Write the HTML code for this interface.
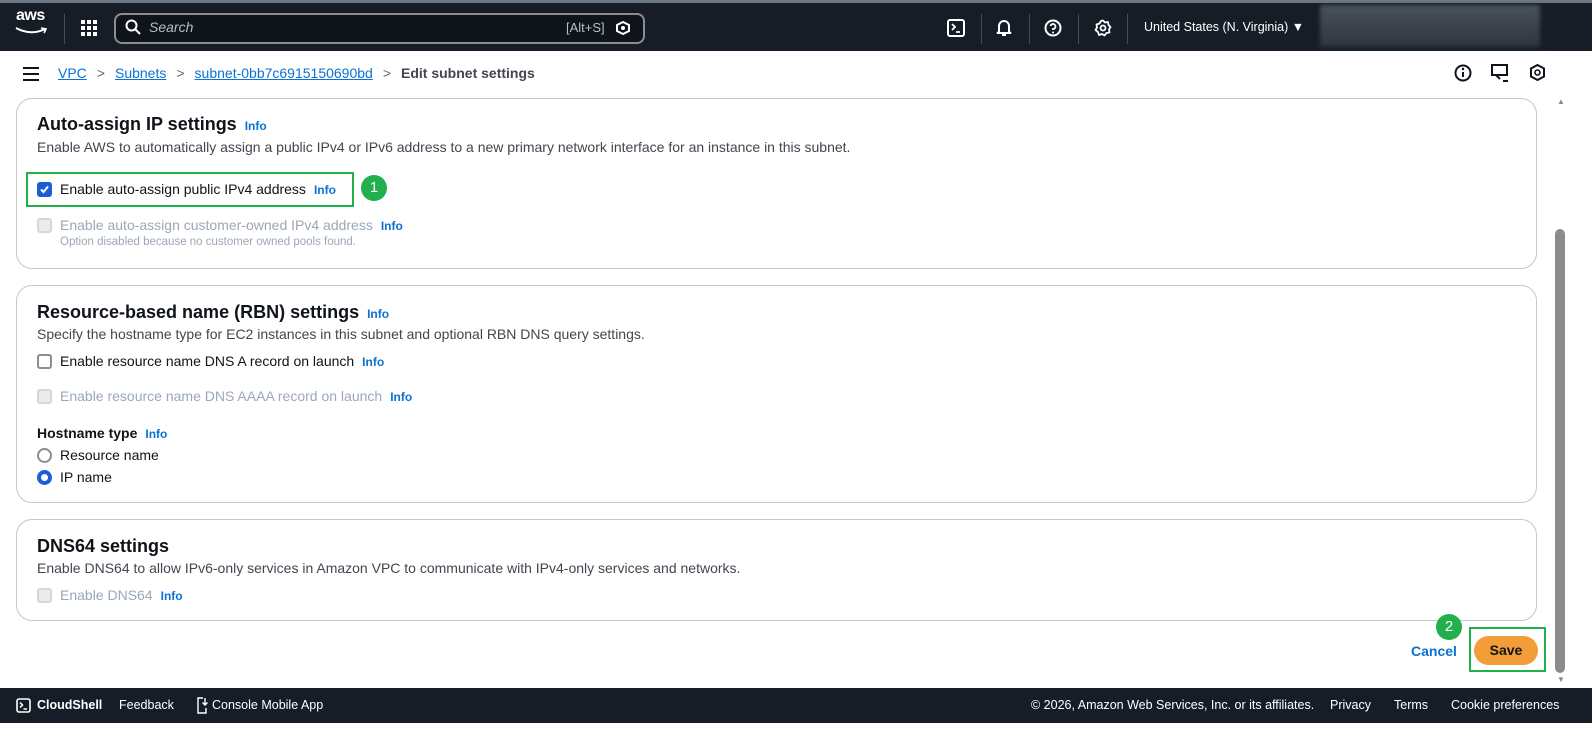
<!DOCTYPE html>
<html><head><meta charset="utf-8"><style>
*{box-sizing:border-box;margin:0;padding:0}
body{width:1592px;height:734px;overflow:hidden;background:#fff;font-family:"Liberation Sans",sans-serif;color:#0f141a;font-size:14px;position:relative}
.top{position:absolute;left:0;top:0;width:1592px;height:51px;background:#161d26;border-top:3px solid #6b7887}
.a{position:absolute}
.w{color:#fff}
.sep{position:absolute;top:11px;width:1px;height:30px;background:#414d5c}
.crumb{position:absolute;top:51px;left:0;width:1592px;height:46px;background:#fff}
.link{color:#0972d3;text-decoration:underline}
.card{position:absolute;left:16px;width:1521px;border:1px solid #c6c6cd;border-radius:16px;background:#fff}
h2{font-size:18px;font-weight:bold;position:absolute;left:20px}
.info{color:#0972d3;font-weight:bold;font-size:12px;margin-left:8px}
.desc{position:absolute;left:20px;font-size:14px;color:#424650}
.cb{position:absolute;width:15px;height:15px;border:2px solid #8c8c94;border-radius:3px;background:#fff}
.cb.d{border-color:#d5d5da;background:#e9ebed}
.lbl{position:absolute;font-size:14px}
.dis{color:#9ba7b6}
.gb{position:absolute;border:2px solid #21b04b}
.num{position:absolute;width:26px;height:26px;border-radius:13px;background:#21b04b;color:#fff;text-align:center;line-height:26px;font-size:15px}
.foot{position:absolute;left:0;top:688px;width:1592px;height:35px;background:#161d26;color:#fff;font-size:12.5px}
.foot span{position:absolute;top:10px}
</style></head><body>
<div class="top">
 <div class="a w" style="left:16px;top:4px;font-size:16px;letter-spacing:-0.5px;font-weight:bold">aws</div>
 <svg class="a" style="left:15px;top:24px" width="34" height="8"><path d="M1 1 Q16 9 30 2" stroke="#fff" stroke-width="2" fill="none"/><path d="M26 1 L31 2 L29 6" stroke="#fff" stroke-width="1.6" fill="none"/></svg>
 <div class="sep" style="left:64px"></div>
 <svg class="a" style="left:81px;top:17px" width="16" height="16" fill="#fff"><rect x="0" y="0" width="4" height="4"/><rect x="6" y="0" width="4" height="4"/><rect x="12" y="0" width="4" height="4"/><rect x="0" y="6" width="4" height="4"/><rect x="6" y="6" width="4" height="4"/><rect x="12" y="6" width="4" height="4"/><rect x="0" y="12" width="4" height="4"/><rect x="6" y="12" width="4" height="4"/><rect x="12" y="12" width="4" height="4"/></svg>
 <div class="a" style="left:114px;top:10px;width:531px;height:31px;border:2px solid #8c8c94;border-radius:8px;background:#0f141a"></div>
 <svg class="a" style="left:125px;top:16px" width="16" height="16"><circle cx="6.5" cy="6.5" r="5" stroke="#fff" stroke-width="2" fill="none"/><path d="M10 10 L15 15" stroke="#fff" stroke-width="2"/></svg>
 <div class="a" style="left:149px;top:16px;color:#b6bec9;font-style:italic;font-size:14px">Search</div>
 <div class="a" style="left:566px;top:17px;color:#b6bec9;font-size:13px">[Alt+S]</div>
 <svg class="a" style="left:616px;top:18px" width="14" height="14"><path d="M7 1 L13 4 L13 10 L7 13 L1 10 L1 4Z" stroke="#fff" stroke-width="2" fill="none"/><circle cx="7" cy="7" r="2" fill="#fff"/></svg>
 <svg class="a" style="left:947px;top:16px" width="18" height="18"><rect x="1" y="1" width="16" height="16" rx="2" stroke="#fff" stroke-width="2" fill="none"/><path d="M5 5 L8 8 L5 11 M9 13 H13" stroke="#fff" stroke-width="1.8" fill="none"/></svg>
 <div class="sep" style="left:981px"></div>
 <svg class="a" style="left:995px;top:15px" width="18" height="20"><path d="M4 14 V8 A5 5 0 0 1 14 8 V14 L16 15 H2 Z M7 17 H11" stroke="#fff" stroke-width="2" fill="none"/></svg>
 <div class="sep" style="left:1029px"></div>
 <svg class="a" style="left:1044px;top:16px" width="18" height="18"><circle cx="9" cy="9" r="7.5" stroke="#fff" stroke-width="2" fill="none"/><path d="M6.5 7 A2.5 2.5 0 1 1 9 10 V11" stroke="#fff" stroke-width="1.8" fill="none"/><circle cx="9" cy="13.5" r="1" fill="#fff"/></svg>
 <div class="sep" style="left:1078px"></div>
 <svg class="a" style="left:1094px;top:16px" width="18" height="18"><path d="M9 1.5 L11 3.5 L14 3 L14.5 6 L16.5 8 L15 10.5 L15.5 13.5 L12.5 14 L10.5 16.5 L8 15 L5 16 L4 13 L1.5 11 L3 8.5 L2.5 5.5 L5.5 4.5 L7 2Z" stroke="#fff" stroke-width="1.8" fill="none" stroke-linejoin="round"/><circle cx="9" cy="9" r="2.5" stroke="#fff" stroke-width="1.8" fill="none"/></svg>
 <div class="sep" style="left:1127px"></div>
 <div class="a w" style="left:1144px;top:17px;font-size:12.5px">United States (N. Virginia) ▼</div>
 <div class="a" style="left:1320px;top:2px;width:220px;height:42px;background:linear-gradient(#4a525c,#2e353e);filter:blur(2px)"></div>
</div>
<div class="crumb">
 <svg class="a" style="left:23px;top:16px" width="16" height="14"><path d="M0 1H16M0 7H16M0 13H16" stroke="#0f141a" stroke-width="2"/></svg>
 <div class="a" style="left:58px;top:14px;font-size:14px"><span class="link">VPC</span><span style="color:#656871;margin:0 10px">&gt;</span><span class="link">Subnets</span><span style="color:#656871;margin:0 10px">&gt;</span><span class="link">subnet-0bb7c6915150690bd</span><span style="color:#656871;margin:0 10px">&gt;</span><b style="color:#424650">Edit subnet settings</b></div>
 <svg class="a" style="left:1454px;top:13px" width="18" height="18"><circle cx="9" cy="9" r="7.5" stroke="#0f141a" stroke-width="2" fill="none"/><path d="M9 8V13" stroke="#0f141a" stroke-width="2"/><circle cx="9" cy="5" r="1.2"/></svg>
 <svg class="a" style="left:1491px;top:13px" width="18" height="19"><rect x="1" y="1" width="15" height="10" stroke="#0f141a" stroke-width="2" fill="none"/><path d="M5 11 L9 15 M12 17 H17" stroke="#0f141a" stroke-width="2"/></svg>
 <svg class="a" style="left:1530px;top:13px" width="15" height="17"><path d="M7.5 1 L14 4.5 L14 12.5 L7.5 16 L1 12.5 L1 4.5Z" stroke="#0f141a" stroke-width="2" fill="none"/><circle cx="7.5" cy="8.5" r="2.5" stroke="#0f141a" stroke-width="1.6" fill="none"/></svg>
</div>

<div class="card" style="top:98px;height:171px">
 <h2 style="top:15px">Auto-assign IP settings<span class="info">Info</span></h2>
 <div class="desc" style="top:40px">Enable AWS to automatically assign a public IPv4 or IPv6 address to a new primary network interface for an instance in this subnet.</div>
</div>
<div class="gb" style="left:26px;top:172px;width:328px;height:35px"></div>
<div class="cb" style="left:37px;top:182px;background:#1b5fd6;border-color:#1b5fd6"></div>
<svg class="a" style="left:39px;top:184px" width="11" height="11"><path d="M2 5.5 L4.5 8 L9 2.5" stroke="#fff" stroke-width="2" fill="none"/></svg>
<div class="lbl" style="left:60px;top:181px">Enable auto-assign public IPv4 address<span class="info">Info</span></div>
<div class="num" style="left:361px;top:175px">1</div>
<div class="cb d" style="left:37px;top:218px"></div>
<div class="lbl dis" style="left:60px;top:217px">Enable auto-assign customer-owned IPv4 address<span class="info">Info</span></div>
<div class="lbl dis" style="left:60px;top:236px;font-size:11.5px">Option disabled because no customer owned pools found.</div>

<div class="card" style="top:285px;height:218px">
 <h2 style="top:16px">Resource-based name (RBN) settings<span class="info">Info</span></h2>
 <div class="desc" style="top:40px">Specify the hostname type for EC2 instances in this subnet and optional RBN DNS query settings.</div>
 <div class="cb" style="left:20px;top:68px"></div>
 <div class="lbl" style="left:43px;top:67px">Enable resource name DNS A record on launch<span class="info">Info</span></div>
 <div class="cb d" style="left:20px;top:103px"></div>
 <div class="lbl dis" style="left:43px;top:102px">Enable resource name DNS AAAA record on launch<span class="info">Info</span></div>
 <div class="lbl" style="left:20px;top:139px;font-weight:bold">Hostname type<span class="info">Info</span></div>
 <div class="a" style="left:20px;top:162px;width:15px;height:15px;border:2px solid #8c8c94;border-radius:50%"></div>
 <div class="lbl" style="left:43px;top:161px">Resource name</div>
 <div class="a" style="left:20px;top:184px;width:15px;height:15px;border:4px solid #1b5fd6;border-radius:50%"></div>
 <div class="lbl" style="left:43px;top:183px">IP name</div>
</div>

<div class="card" style="top:519px;height:102px">
 <h2 style="top:16px">DNS64 settings</h2>
 <div class="desc" style="top:40px">Enable DNS64 to allow IPv6-only services in Amazon VPC to communicate with IPv4-only services and networks.</div>
 <div class="cb d" style="left:20px;top:68px"></div>
 <div class="lbl dis" style="left:43px;top:67px">Enable DNS64<span class="info">Info</span></div>
</div>

<div class="a" style="left:1411px;top:643px;color:#0972d3;font-weight:bold;font-size:14px">Cancel</div>
<div class="gb" style="left:1469px;top:627px;width:77px;height:45px"></div>
<div class="a" style="left:1474px;top:636px;width:64px;height:29px;border-radius:15px;background:#f29d38;text-align:center;line-height:29px;font-weight:bold;font-size:14px">Save</div>
<div class="num" style="left:1436px;top:614px">2</div>

<div class="a" style="left:1555px;top:97px;width:10px;height:590px">
 <div style="position:absolute;left:2px;top:0;color:#888;font-size:8px">▲</div>
 <div style="position:absolute;left:0;top:132px;width:10px;height:444px;background:#8b8b8b;border-radius:5px"></div>
 <div style="position:absolute;left:2px;top:578px;color:#888;font-size:8px">▼</div>
</div>

<div class="foot">
 <svg class="a" style="left:16px;top:10px" width="15" height="15"><rect x="1" y="1" width="13" height="13" rx="2" stroke="#fff" stroke-width="1.6" fill="none"/><path d="M4 4.5 L6.5 7 L4 9.5 M7.5 11 H11" stroke="#fff" stroke-width="1.5" fill="none"/></svg>
 <span style="left:37px;font-weight:bold">CloudShell</span>
 <span style="left:119px">Feedback</span>
 <svg class="a" style="left:196px;top:9px" width="13" height="17"><path d="M7 1 H2 V16 H10 V11 M9 1 V8 M6.5 5.5 L9 8 L11.5 5.5" stroke="#fff" stroke-width="1.4" fill="none"/></svg>
 <span style="left:212px">Console Mobile App</span>
 <span style="left:1031px">© 2026, Amazon Web Services, Inc. or its affiliates.</span>
 <span style="left:1330px">Privacy</span>
 <span style="left:1394px">Terms</span>
 <span style="left:1451px">Cookie preferences</span>
</div>
</body></html>
